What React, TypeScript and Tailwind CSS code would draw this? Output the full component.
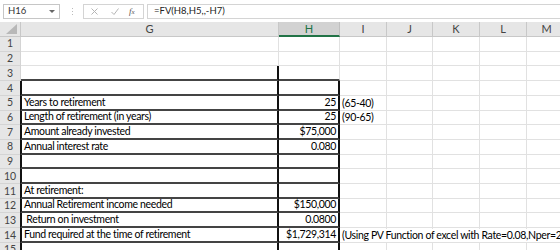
import React from 'react';

const cols = [
  { key: 'G', w: 258 },
  { key: 'H', w: 61 },
  { key: 'I', w: 47 },
  { key: 'J', w: 46 },
  { key: 'K', w: 47 },
  { key: 'L', w: 47 },
  { key: 'M', w: 40 },
];

type Row = { g?: string; h?: string; i?: string; boxed?: boolean };

const rows: Row[] = [
  {},
  {},
  {},
  { boxed: true },
  { g: 'Years to retirement', h: '25', i: '(65-40)', boxed: true },
  { g: 'Length of retirement (in years)', h: '25', i: '(90-65)', boxed: true },
  { g: 'Amount already invested', h: '$75,000', boxed: true },
  { g: 'Annual interest rate', h: '0.080', boxed: true },
  { boxed: true },
  { boxed: true },
  { g: 'At retirement:', boxed: true },
  { g: 'Annual Retirement income needed', h: '$150,000', boxed: true },
  { g: '\u00a0Return on investment', h: '0.0800', boxed: true },
  {
    g: 'Fund required at the time of retirement',
    h: '$1,729,314',
    i: '(Using PV Function of excel with Rate=0.08,Nper=25,Pmt=150000)',
    boxed: true,
  },
  { boxed: true },
];

const font = { fontFamily: 'Lato, "Liberation Sans", sans-serif' };

function FormulaBar() {
  return (
    <div className="flex h-[22px] items-center bg-white pt-[1px]">
      <div className="ml-[3px] flex h-[15px] w-[57px] items-center justify-between border border-[#c6c6c6] bg-white pl-[4px] pr-[4px] text-[9.5px] text-[#333]">
        <span>H16</span>
        <svg width="6" height="4" viewBox="0 0 6 4">
          <path d="M0 0h6L3 3z" fill="#666" />
        </svg>
      </div>
      <div className="ml-[7px] flex w-[10px] flex-col items-center gap-[2px]">
        <span className="h-[1px] w-[1px] bg-[#bbb]" />
        <span className="h-[1px] w-[1px] bg-[#bbb]" />
        <span className="h-[1px] w-[1px] bg-[#bbb]" />
      </div>
      <div className="ml-[6px] flex h-[15px] w-[61px] items-center border border-[#d4d4d4] bg-white">
        <svg className="ml-[7px]" width="7" height="7" viewBox="0 0 7 7">
          <path d="M0.5 0.5l6 6M6.5 0.5l-6 6" stroke="#b5b5b5" strokeWidth="1" />
        </svg>
        <svg className="ml-[13px]" width="8" height="7" viewBox="0 0 8 7">
          <path d="M0.5 4l2.5 2.5L7.5 0.5" stroke="#b5b5b5" strokeWidth="1" fill="none" />
        </svg>
        <span className="ml-[10px] text-[9px] italic text-[#555]" style={{ fontFamily: '"Liberation Serif", serif' }}>
          f<span className="text-[7px]">x</span>
        </span>
      </div>
      <div className="ml-[3px] flex h-[15px] flex-1 items-center border border-r-0 border-[#d4d4d4] bg-white pl-[6px] text-[9.5px] text-[#222]">
        =FV(H8,H5,,-H7)
      </div>
    </div>
  );
}

function HeaderRow() {
  return (
    <div className="flex h-[15px] bg-[#e6e6e6]">
      <div className="relative w-[21px] shrink-0 border-r border-b border-[#c8c8c8]">
        <svg className="absolute bottom-[2px] right-[3px]" width="11" height="10" viewBox="0 0 11 10">
          <path d="M11 0v10H0z" fill="#b8b8b8" />
        </svg>
      </div>
      {cols.map((c) => (
        <div
          key={c.key}
          className={
            c.key === 'H'
              ? 'flex shrink-0 items-center justify-center border-r border-b-2 border-r-[#c0c0c0] border-b-[#217346] bg-[#d2d2d2] pt-[1px] text-[11px] text-[#217346]'
              : 'flex shrink-0 items-center justify-center border-r border-b border-[#c8c8c8] text-[11px] text-[#444]'
          }
          style={{ width: c.w }}
        >
          {c.key}
        </div>
      ))}
    </div>
  );
}

function SheetRow({ row, n, next }: { row: Row; n: number; next?: Row }) {
  const boxBottom = row.boxed || next?.boxed;
  return (
    <div className="flex h-[14.71px]">
      <div className="flex w-[21px] shrink-0 items-center justify-center border-r border-b border-[#d4d4d4] bg-[#e6e6e6] pt-[1px] text-[10.5px] text-[#444]">
        {n}
      </div>
      <div
        className={
          'relative flex shrink-0 items-end pl-[2px] text-[10.5px] leading-[13px] tracking-[-0.35px] text-black ' +
          (row.boxed ? 'ml-[-1px] border-l-2 border-l-[#111] ' : '') +
          (boxBottom ? 'border-r-2 border-b-2 border-r-[#111] border-b-[#444]' : 'border-r border-b border-[#e1e1e1]')
        }
        style={{ width: row.boxed ? 259 : 258 }}
      >
        <span className="whitespace-pre">{row.g}</span>
      </div>
      <div
        className={
          'flex shrink-0 items-end justify-end pr-[2px] text-[10.5px] leading-[13px] tracking-[-0.35px] text-black ' +
          (boxBottom && row.boxed
            ? 'border-r-2 border-b-2 border-r-[#111] border-b-[#444]'
            : boxBottom
              ? 'border-r border-b-2 border-r-[#e1e1e1] border-b-[#444]'
              : 'border-r border-b border-[#e1e1e1]')
        }
        style={{ width: 61 }}
      >
        {row.h}
      </div>
      {cols.slice(2).map((c, idx) => (
        <div
          key={c.key}
          className="relative shrink-0 border-r border-b border-[#e1e1e1]"
          style={{ width: c.w }}
        >
          {idx === 0 && row.i && (
            <span className="absolute bottom-0 left-[2px] z-10 whitespace-nowrap bg-white text-[10.5px] leading-[13px] tracking-[-0.35px] text-black">
              {row.i}
            </span>
          )}
        </div>
      ))}
    </div>
  );
}

export default function App() {
  return (
    <div className="h-[250px] w-[560px] overflow-hidden bg-white" style={font}>
      <FormulaBar />
      <HeaderRow />
      {rows.map((r, i) => (
        <SheetRow key={i} row={r} n={i + 1} next={rows[i + 1]} />
      ))}
    </div>
  );
}
